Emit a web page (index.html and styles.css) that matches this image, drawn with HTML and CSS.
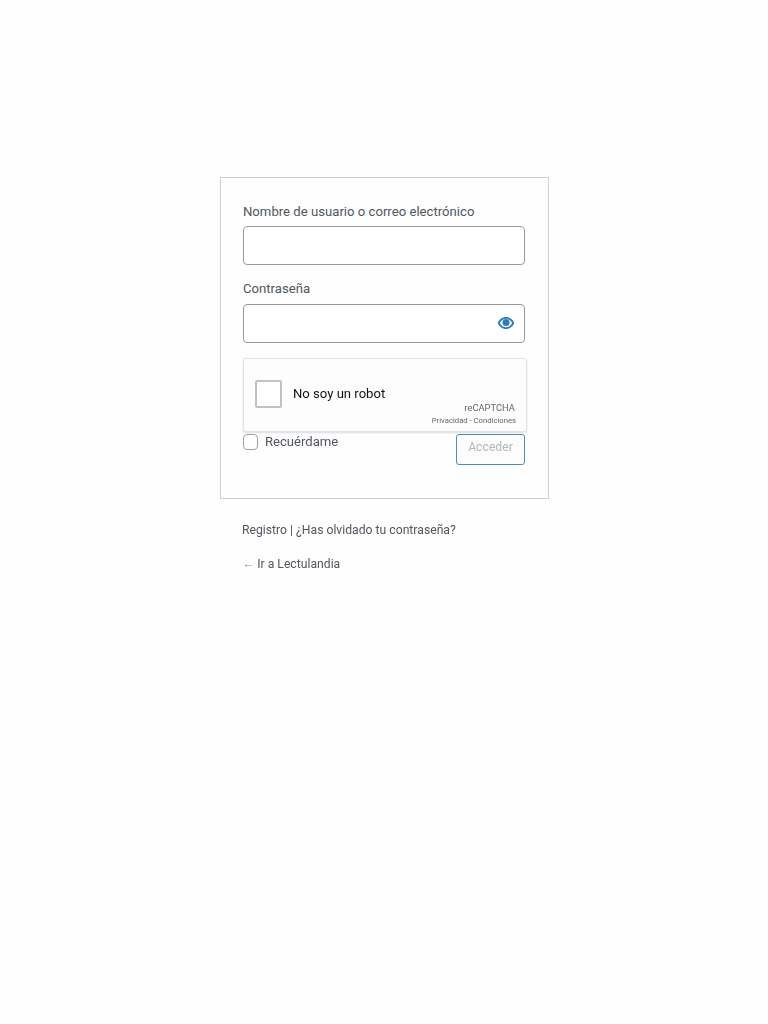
FILE: index.html
```html
<!DOCTYPE html>
<html lang="es">
<head>
<meta charset="utf-8">
<title>Acceder</title>
<link rel="stylesheet" href="styles.css">
</head>
<body>
<main class="login">
  <form class="card">
    <label class="field-label">Nombre de usuario o correo electrónico</label>
    <div class="input"></div>
    <label class="field-label second">Contraseña</label>
    <div class="input password">
      <svg class="eye" width="18" height="14" viewBox="0 0 18 14" aria-hidden="true">
        <path fill="#2f7ab8" fill-rule="evenodd" d="M9 1C5.300 1 2.100 3.400.8 7c1.300 3.600 4.500 6 8.200 6s6.900-2.400 8.200-6C15.900 3.400 12.700 1 9 1zM9 2.700C11.500 2.700 13.900 4.300 15.100 7 13.900 9.700 11.500 11.300 9 11.300S4.100 9.700 2.900 7C4.100 4.300 6.500 2.700 9 2.700z"/>
        <circle cx="9" cy="6.500" r="3.500" fill="#2f7ab8"/>
      </svg>
    </div>
    <div class="captcha">
      <span class="captcha-box"></span>
      <span class="captcha-text">No soy un robot</span>
      <div class="captcha-brand">
        <span class="brand-name">reCAPTCHA</span>
        <span class="brand-links">Privacidad - Condiciones</span>
      </div>
    </div>
    <div class="actions">
      <div class="remember"><span class="check"></span><span>Recuérdame</span></div>
      <div class="submit">Acceder</div>
    </div>
  </form>
  <p class="nav">Registro | ¿Has olvidado tu contraseña?</p>
  <p class="back"><span class="arrow">←</span> Ir a Lectulandia</p>
</main>
</body>
</html>
```
FILE: styles.css
```css
* { box-sizing: border-box; }
html, body { margin: 0; background: #fefefe; }
body { font-family: Roboto, "Liberation Sans", sans-serif; color: #50575e; }
.login { width: 329px; margin: 177px 0 0 220px; filter: blur(.55px); }
.card {
  height: 322px;
  padding: 25px 23px 0 22px;
  border: 1px solid #cfcfcf;
  background: #fefefe;
}
.field-label { display: block; font-size: 13.15px; line-height: 18px; color: #50575e; }
.field-label.second { margin-top: 15px; }
.input {
  height: 39px;
  margin-top: 5px;
  border: 1px solid #989a9e;
  border-radius: 4px;
  background: #fff;
}
.input.password { margin-top: 6px; display: flex; align-items: center; justify-content: flex-end; padding-right: 9px; }
.eye { display: block; margin-bottom: 2px; }
.captcha {
  position: relative;
  display: flex;
  align-items: center;
  width: 284px;
  height: 74px;
  margin-top: 15px;
  padding: 0 0 2px 11px;
  border: 1px solid #e3e3e3;
  border-radius: 3px;
  background: #fdfdfd;
  box-shadow: 0 1px 2px rgba(0, 0, 0, .14);
}
.captcha-box {
  width: 27px;
  height: 28px;
  border: 2px solid #c1c1c1;
  border-radius: 2px;
  background: #fff;
}
.captcha-text { margin: 0 0 2px 11px; font-size: 13.1px; color: #111; }
.captcha-brand {
  position: absolute;
  right: 10px;
  bottom: 4px;
  display: flex;
  flex-direction: column;
  align-items: flex-end;
  color: #666;
}
.brand-name { font-size: 9.4px; line-height: 13px; margin: 0 1px 0 0; }
.brand-links { font-size: 7.7px; line-height: 12px; margin-top: 1px; }
.actions { display: flex; justify-content: space-between; align-items: flex-start; margin-top: 2px; }
.remember { display: flex; align-items: center; gap: 7px; font-size: 13.1px; line-height: 16px; color: #50575e; }
.check { width: 15px; height: 16px; border: 1px solid #a0a2a6; border-radius: 4px; background: #fff; }
.submit {
  width: 69px;
  height: 31px;
  border: 1px solid #4d8cc0;
  border-radius: 3px;
  background: #fcfcfc;
  color: #b4b6b8;
  font-size: 12.2px;
  line-height: 25px;
  text-align: center;
}
.nav, .back { margin: 0; font-size: 12.2px; line-height: 16px; color: #50575e; }
.nav { margin: 23px 0 0 22px; }
.back { margin: 18px 0 0 22px; }
.arrow { color: #8c8f94; }
```
